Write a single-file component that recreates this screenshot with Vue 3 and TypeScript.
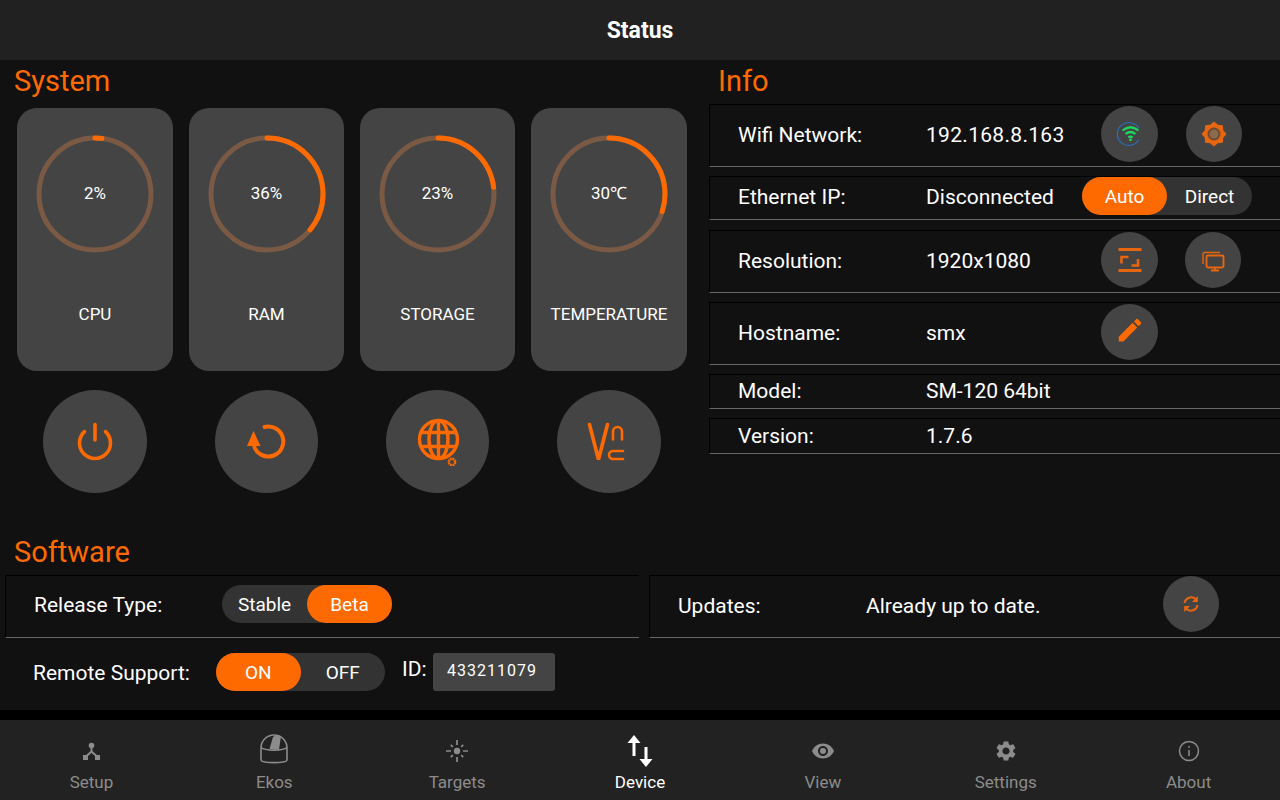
<script setup lang="ts">
interface Gauge { label: string; text: string; pct: number }
const R = 56
const C = 2 * Math.PI * R
const gauges: Gauge[] = [
  { label: 'CPU', text: '2%', pct: 2 },
  { label: 'RAM', text: '36%', pct: 36 },
  { label: 'STORAGE', text: '23%', pct: 23 },
  { label: 'TEMPERATURE', text: '30℃', pct: 30 },
]
const starPoints = Array.from({ length: 16 }, (_, k) => {
  const a = (k * Math.PI) / 8
  const r = k % 2 === 0 ? 12.5 : 10
  return `${(14 + r * Math.sin(a)).toFixed(2)},${(14 - r * Math.cos(a)).toFixed(2)}`
}).join(' ')
</script>

<template>
  <div class="app">
    <header class="top">Status</header>
    <main class="content">
      <div class="upper">
        <section class="system">
          <h2 class="title system-title">System</h2>
          <div class="grid">
            <div v-for="g in gauges" :key="g.label" class="card">
              <div class="ring">
                <svg width="120" height="120" viewBox="0 0 120 120">
                  <circle cx="60" cy="60" :r="R" fill="none" stroke="#7a5a45" stroke-width="5" />
                  <circle cx="60" cy="60" :r="R" fill="none" stroke="#ff6a00" stroke-width="5" stroke-linecap="round"
                    transform="rotate(-90 60 60)" :stroke-dasharray="`${(g.pct / 100) * C} ${C}`" />
                </svg>
                <span class="ring-text">{{ g.text }}</span>
              </div>
              <div class="card-label">{{ g.label }}</div>
            </div>
            <div class="cell"><button class="round big outer">
              <svg width="40" height="40" viewBox="0 0 40 40" fill="none" stroke="#ff6a00" stroke-width="3.6" stroke-linecap="round">
                <path d="M9.5 9.6A15.5 15.5 0 1 0 30.5 9.6" /><path d="M20 2.5V18" />
              </svg>
            </button></div>
            <div class="cell"><button class="round big">
              <svg width="40" height="40" viewBox="0 0 40 40" fill="none">
                <path d="M16 5.500A15 15 0 1 1 7 24" stroke="#ff6a00" stroke-width="4" />
                <path d="M6.500 9L0 24H13.500Z" fill="#ff6a00" />
              </svg>
            </button></div>
            <div class="cell"><button class="round big">
              <svg width="48" height="48" viewBox="0 0 48 48" fill="none" stroke="#ff6a00" stroke-width="3.4">
                <circle cx="24.500" cy="21.500" r="19" />
                <ellipse cx="24.500" cy="21.500" rx="9.500" ry="19" />
                <path d="M24.500 2.500V40.500M7.500 14.500H41.500M7.500 28.500H41.500" />
                <circle cx="38" cy="44" r="3.200" stroke-width="2.400" stroke-dasharray="1.900 .6" />
              </svg>
            </button></div>
            <div class="cell"><button class="round big outer">
              <svg width="44" height="44" viewBox="0 0 44 44" fill="none" stroke="#ff6a00" stroke-linecap="round">
                <path d="M2.500 4.500L11.500 39.500L20.500 4.500" stroke-width="3.600" />
                <path d="M26 19.500V11.500a4.500 4.500 0 0 1 9 0V19.500" stroke-width="2.600" />
                <path d="M36 31H26a4 4 0 0 0 0 8H36" stroke-width="2.600" />
              </svg>
            </button></div>
          </div>
        </section>

        <section class="info">
          <h2 class="title info-title">Info</h2>
          <div class="row tall">
            <span class="label">Wifi Network:</span><span class="value ip">192.168.8.163</span>
            <button class="round">
              <svg width="28" height="28" viewBox="0 0 28 28" fill="none">
                <path d="M22.800 8.200A11.500 11.500 0 1 0 22.800 19.800" stroke="#2a6fc4" stroke-width="1.100" />
                <path d="M6.500 10.500Q14.500 4 22.500 10.500M9.500 14Q14.500 10 19.500 14M12.300 17.300Q14.500 15.800 16.700 17.300" stroke="#1ed760" stroke-width="2.200" />
                <circle cx="14.500" cy="19.800" r="1.400" fill="#1ed760" />
              </svg>
            </button>
            <button class="round second">
              <svg width="28" height="28" viewBox="0 0 28 28">
                <polygon :points="starPoints" fill="#e8660f" />
                <circle cx="14" cy="14" r="5.500" fill="#8a6a50" stroke="#6e4a2e" stroke-width="2" />
              </svg>
            </button>
          </div>
          <div class="row eth">
            <span class="label">Ethernet IP:</span><span class="value narrow">Disconnected</span>
            <div class="toggle"><span class="opt on">Auto</span><span class="opt">Direct</span></div>
          </div>
          <div class="row tall res">
            <span class="label">Resolution:</span><span class="value">1920x1080</span>
            <button class="round">
              <svg width="24" height="26" viewBox="0 0 24 26" fill="none" stroke="#e8660f">
                <path d="M0.500 2.500H23.500M0.500 23.500H23.500" stroke-width="3" />
                <path d="M10.500 10H3.500V16.500" stroke-width="2.600" />
                <path d="M20 12V18.500H13.500" stroke-width="2.600" />
              </svg>
            </button>
            <button class="round second tight">
              <svg width="24" height="24" viewBox="0 0 24 24" fill="none" stroke="#e8660f">
                <path d="M19 4.500H4a2 2 0 0 0-2 2V16" stroke-width="1.400" />
                <rect x="5.500" y="7.500" width="17" height="12" rx="1.500" stroke-width="1.900" />
                <path d="M14 19.500V22M10 22.500H18" stroke-width="1.900" />
              </svg>
            </button>
          </div>
          <div class="row tall">
            <span class="label">Hostname:</span><span class="value">smx</span>
            <button class="round">
              <svg width="30" height="30" viewBox="0 1.500 24 24" fill="#ff6a00">
                <path d="M3 17.250V21h3.750L17.810 9.940l-3.750-3.750L3 17.250zM20.710 7.040c.39-.39.39-1.020 0-1.410l-2.340-2.340c-.39-.39-1.020-.39-1.410 0l-1.830 1.830 3.750 3.750 1.830-1.830z" />
              </svg>
            </button>
          </div>
          <div class="row plain model"><span class="label">Model:</span><span class="value">SM-120 64bit</span></div>
          <div class="row plain version"><span class="label">Version:</span><span class="value">1.7.6</span></div>
        </section>
      </div>

      <h2 class="title soft-title">Software</h2>
      <div class="soft-rows">
        <div class="row soft left">
          <span class="label">Release Type:</span>
          <div class="toggle"><span class="opt">Stable</span><span class="opt on">Beta</span></div>
        </div>
        <div class="row soft right">
          <span class="label low">Updates:</span><span class="value wide low">Already up to date.</span>
          <button class="round sync">
            <svg width="20" height="20" viewBox="0 0 20 20" fill="none" stroke="#e8660f" stroke-width="2">
              <path d="M3.500 9A6.700 6.700 0 0 1 15 5.500" /><path d="M16.500 11A6.700 6.700 0 0 1 5 14.500" />
              <path d="M16.800 2V8H11Z" fill="#e8660f" stroke="none" /><path d="M3.200 18V12H9Z" fill="#e8660f" stroke="none" />
            </svg>
          </button>
        </div>
      </div>
      <div class="remote">
        <span class="remote-label">Remote Support:</span>
        <div class="toggle remote-toggle"><span class="opt on">ON</span><span class="opt">OFF</span></div>
        <span class="id-label">ID:</span>
        <span class="id-box">433211079</span>
      </div>
    </main>

    <nav class="nav">
      <div class="tab">
        <div class="slot"><svg width="24" height="24" viewBox="0 0 24 24" fill="#8c8c8c" stroke="#8c8c8c">
          <circle cx="12.500" cy="6.500" r="2.800" stroke="none" />
          <path d="M12.500 8V12.500L7 17.500M12.500 12.500L18 17.500" fill="none" stroke-width="2" />
          <rect x="4" y="16" width="5" height="5" stroke="none" /><rect x="16" y="16" width="5" height="5" stroke="none" />
        </svg></div><span>Setup</span>
      </div>
      <div class="tab">
        <div class="slot ekos"><svg width="30" height="34" viewBox="0 0 30 34" fill="none" stroke="#8c8c8c" stroke-width="1.600">
          <path d="M2 16A13 13 0 0 1 28 16V28C28 31.500 2 31.500 2 28Z" /><path d="M2 15.500C6 19 24 19 28 15.500" />
          <path d="M10.500 17L14 5C16 3 20 3 22 4L20 17.800Z" fill="#8c8c8c" stroke="none" />
        </svg></div><span>Ekos</span>
      </div>
      <div class="tab">
        <div class="slot"><svg width="24" height="24" viewBox="0 0 24 24" fill="none" stroke="#8c8c8c" stroke-width="1.700">
          <circle cx="12" cy="12" r="3.200" fill="#8c8c8c" stroke="none" />
          <path d="M12 1V6M12 18V23M1 12H6M18 12H23M5.800 5.800L7.800 7.800M16.200 16.200L18.200 18.200M18.200 5.800L16.200 7.800M7.800 16.200L5.800 18.200" />
        </svg></div><span>Targets</span>
      </div>
      <div class="tab active">
        <div class="slot"><svg width="28" height="34" viewBox="0 0 28 34" fill="#fff">
          <path d="M8 1L14.500 9H9.500V22H6.500V9H1.500Z" /><path d="M18.500 13H21.500V25H26.500L20 33L13.500 25H18.500Z" />
        </svg></div><span>Device</span>
      </div>
      <div class="tab">
        <div class="slot"><svg width="24" height="24" viewBox="0 0 24 24" fill="#8c8c8c">
          <path fill-rule="evenodd" d="M12 4.500C7 4.500 2.730 7.610 1 12c1.730 4.390 6 7.500 11 7.500s9.270-3.110 11-7.500c-1.730-4.390-6-7.500-11-7.500zM12 17c-2.760 0-5-2.240-5-5s2.240-5 5-5 5 2.240 5 5-2.240 5-5 5z" />
          <circle cx="12" cy="12" r="3" />
        </svg></div><span>View</span>
      </div>
      <div class="tab">
        <div class="slot"><svg width="24" height="24" viewBox="0 0 24 24" fill="#8c8c8c">
          <path d="M19.140 12.940c.04-.3.06-.61.06-.94 0-.32-.02-.64-.07-.94l2.030-1.580c.18-.14.23-.41.12-.61l-1.920-3.320c-.12-.22-.37-.29-.59-.22l-2.390.96c-.5-.38-1.030-.7-1.620-.94l-.36-2.540c-.04-.24-.24-.41-.48-.41h-3.840c-.24 0-.43.17-.47.41l-.36 2.540c-.59.24-1.130.57-1.620.94l-2.390-.96c-.22-.08-.47 0-.59.22L2.740 8.870c-.12.21-.08.47.12.61l2.030 1.580c-.05.3-.09.63-.09.94s.02.64.07.94l-2.030 1.580c-.18.14-.23.41-.12.61l1.920 3.320c.12.22.37.29.59.22l2.390-.96c.5.38 1.030.7 1.620.94l.36 2.540c.05.24.24.41.48.41h3.840c.24 0 .44-.17.47-.41l.36-2.540c.59-.24 1.130-.56 1.620-.94l2.390.96c.22.08.47 0 .59-.22l1.920-3.320c.12-.22.07-.47-.12-.61l-2.010-1.580zM12 15.600c-1.980 0-3.600-1.620-3.600-3.600s1.620-3.600 3.600-3.600 3.600 1.620 3.600 3.600-1.620 3.600-3.600 3.600z" />
        </svg></div><span>Settings</span>
      </div>
      <div class="tab">
        <div class="slot"><svg width="24" height="24" viewBox="0 0 24 24" fill="none" stroke="#8c8c8c" stroke-width="1.500">
          <circle cx="12" cy="12" r="9.500" /><path d="M12 11V17M12 7V8.800" />
        </svg></div><span>About</span>
      </div>
    </nav>
  </div>
</template>

<style scoped>
.app { width: 1280px; height: 800px; display: flex; flex-direction: column; background: #000; color: #fff; font-family: Roboto, "Liberation Sans", sans-serif; overflow: hidden; }
.top { height: 60px; flex: none; background: #212121; display: flex; align-items: center; justify-content: center; font-size: 23px; font-weight: 700; }
.content { height: 650px; flex: none; background: #111; }
.upper { height: 472px; display: flex; }
.title { margin: 0; font-size: 29px; font-weight: 400; color: #ff6a00; }
.system { width: 709px; flex: none; }
.system-title { height: 48px; line-height: 42px; padding-left: 14px; }
.grid { display: grid; grid-template-columns: 156px 155px 155px 156px; column-gap: 16px; row-gap: 19px; margin-left: 17px; }
.card { height: 263px; background: #444; border-radius: 20px; display: flex; flex-direction: column; align-items: center; padding-top: 26px; box-sizing: border-box; }
.ring { display: grid; place-items: center; width: 120px; height: 120px; }
.ring > * { grid-area: 1 / 1; }
.ring-text { font-size: 17px; line-height: 20px; margin-top: -2px; }
.card-label { margin-top: 49px; font-size: 17px; line-height: 22px; white-space: nowrap; }
.cell { display: flex; justify-content: center; }
.round { width: 57px; height: 56px; flex: none; padding: 0; border: 0; border-radius: 50%; background: #444; display: flex; align-items: center; justify-content: center; }
.round.big { width: 103px; height: 103px; }
.round.big.outer { width: 104px; }
.round.second { margin-left: 28px; width: 56px; }
.round.second.tight { margin-left: 27px; }
.round.sync { width: 56px; }
.info { flex: 1; }
.info-title { height: 44px; line-height: 42px; padding-left: 9px; }
.row { display: flex; align-items: center; box-sizing: border-box; border-top: 1px solid #000; border-left: 1px solid #000; border-bottom: 1px solid #666; padding-left: 28px; margin-top: 9px; font-size: 21px; }
.info-title + .row { margin-top: 0; }
.label { width: 188px; flex: none; margin-top: 2px; }
.value { width: 175px; flex: none; margin-top: 2px; }
.plain .label, .plain .value { margin-top: 0; }
.low { margin-top: 4px; }
.label.low, .value.low { margin-top: 4px; }
.value.ip { letter-spacing: 0.3px; }
.value.narrow { width: 156px; }
.value.wide { width: 297px; }
.tall { height: 63px; padding-bottom: 4px; }
.eth { height: 44px; padding-bottom: 4px; }
.res { margin-top: 10px; }
.model { height: 35px; padding-bottom: 2px; }
.version { height: 36px; }
.toggle { display: flex; width: 170px; height: 38px; border-radius: 19px; background: #333; font-size: 19px; flex: none; }
.remote-toggle { width: 169px; }
.opt { width: 85px; height: 100%; display: flex; align-items: center; justify-content: center; border-radius: 19px; }
.opt.on { background: #ff6a00; }
.soft-title { height: 40px; line-height: 40px; padding-left: 14px; }
.soft-rows { display: flex; margin-top: 3px; }
.soft { height: 63px; padding-bottom: 5px; }
.soft.left { width: 634px; margin: 0 0 0 5px; }
.soft.right { flex: 1; margin: 0 0 0 10px; }
.remote { display: flex; align-items: flex-start; margin-top: 15px; padding-left: 33px; font-size: 21px; }
.remote-label { width: 183px; line-height: 40px; }
.id-label { margin-left: 17px; width: 31px; line-height: 32px; }
.id-box { width: 122px; height: 38px; box-sizing: border-box; padding-left: 14px; background: #444; border-radius: 3px; font-size: 16px; letter-spacing: 1px; line-height: 36px; }
.nav { margin-top: 10px; height: 80px; flex: none; background: #222; display: grid; grid-template-columns: repeat(7, 1fr); }
.tab { display: flex; flex-direction: column; align-items: center; font-size: 17px; color: #8c8c8c; line-height: 20px; }
.tab.active { color: #fff; }
.slot { height: 52px; padding-top: 10px; box-sizing: border-box; display: flex; align-items: center; justify-content: center; flex: none; }
.slot.ekos { padding-top: 5px; }
</style>
